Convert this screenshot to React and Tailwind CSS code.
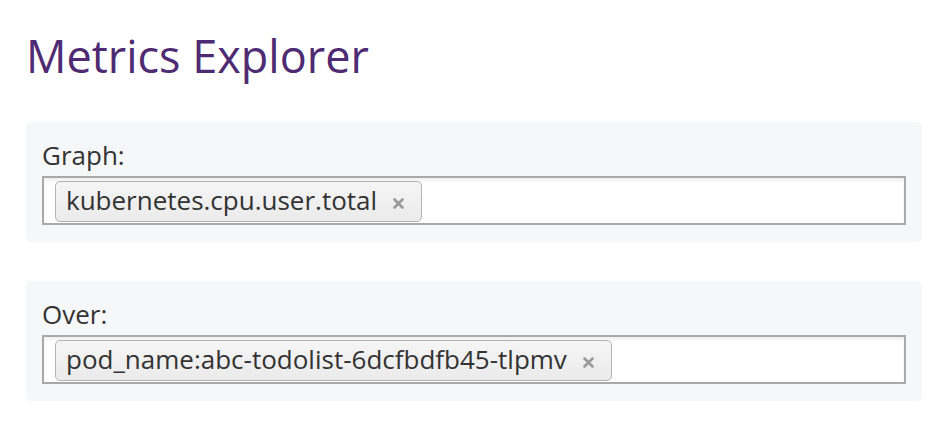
import React from 'react';

const Tag = ({ label }) => (
  <span className="mt-[3px] inline-flex items-center h-[41px] pl-[10px] pr-[17px] pb-[3px] border border-[#b3b3b3] rounded-[5px] bg-gradient-to-b from-[#f5f5f5] to-[#ebebeb] text-[26px] leading-[30px] text-[#333]">
    <span>{label}</span>
    <svg className="ml-[16px] mt-[6px]" width="11" height="11" viewBox="0 0 11 11">
      <path d="M1.5 1.5 L9.5 9.5 M9.5 1.5 L1.5 9.5" stroke="#9a9a9a" strokeWidth="2.6" strokeLinecap="round" />
    </svg>
  </span>
);

const Field = ({ title, value, className = '' }) => (
  <div className={`bg-[#f6f7f9] rounded-[5px] px-[16px] pt-[18px] pb-[17px] ${className}`}>
    <div className="text-[26px] leading-[30px] text-[#333] mb-[6px]">{title}</div>
    <div className="h-[49px] flex items-start pl-[11px] bg-white border-2 border-[#a9a9a9] shadow-[inset_0_3px_3px_rgba(0,0,0,0.06)]">
      <Tag label={value} />
    </div>
  </div>
);

export default function App() {
  return (
    <div className="w-[942px] h-[424px] bg-white px-[26px] pr-[20px] font-['Open_Sans',sans-serif]">
      <h1 className="pt-[25px] text-[45px] leading-[62px] text-[#4e2b72] font-normal">Metrics Explorer</h1>
      <Field title="Graph:" value="kubernetes.cpu.user.total" className="mt-[35px]" />
      <Field title="Over:" value="pod_name:abc-todolist-6dcfbdfb45-tlpmv" className="mt-[39px]" />
    </div>
  );
}
